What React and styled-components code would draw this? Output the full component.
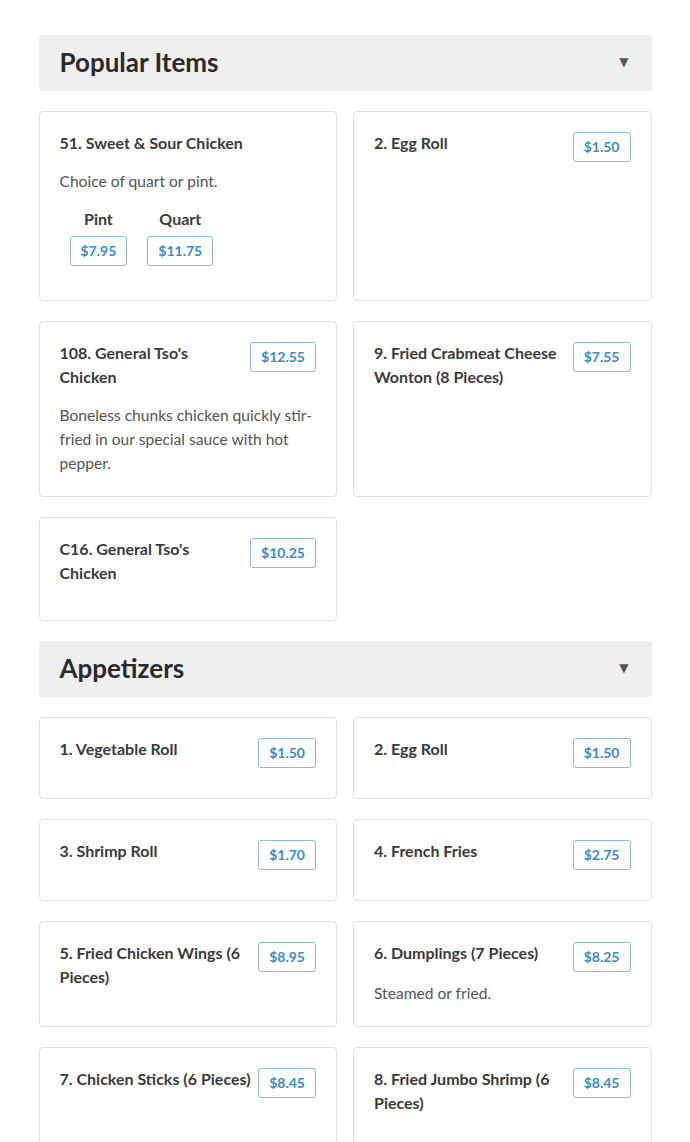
import React from 'react'
import styled, { createGlobalStyle } from 'styled-components'

const GlobalStyle = createGlobalStyle`
    body {
        margin: 0;
        background: #fff;
        font-family: Lato, "Liberation Sans", sans-serif;
        color: #333;
    }
`

const menu = [
    {
        name: 'Popular Items',
        items: [
            {
                title: '51. Sweet & Sour Chicken',
                description: 'Choice of quart or pint.',
                options: [
                    { label: 'Pint', price: '$7.95' },
                    { label: 'Quart', price: '$11.75' }
                ]
            },
            { title: '2. Egg Roll', price: '$1.50' },
            {
                title: "108. General Tso's Chicken",
                price: '$12.55',
                description: 'Boneless chunks chicken quickly stir-fried in our special sauce with hot pepper.'
            },
            { title: '9. Fried Crabmeat Cheese Wonton (8 Pieces)', price: '$7.55' },
            { title: "C16. General Tso's Chicken", price: '$10.25' }
        ]
    },
    {
        name: 'Appetizers',
        items: [
            { title: '1. Vegetable Roll', price: '$1.50' },
            { title: '2. Egg Roll', price: '$1.50' },
            { title: '3. Shrimp Roll', price: '$1.70' },
            { title: '4. French Fries', price: '$2.75' },
            { title: '5. Fried Chicken Wings (6 Pieces)', price: '$8.95' },
            { title: '6. Dumplings (7 Pieces)', price: '$8.25', description: 'Steamed or fried.' },
            { title: '7. Chicken Sticks (6 Pieces)', price: '$8.45' },
            { title: '8. Fried Jumbo Shrimp (6 Pieces)', price: '$8.45' }
        ]
    }
]

const MenuItem = ({ item }) => (
    <Card>
        <CardHeader>
            <ItemTitle>{item.title}</ItemTitle>
            {item.price && <Price $side>{item.price}</Price>}
        </CardHeader>
        {item.description && <Description>{item.description}</Description>}
        {item.options && (
            <Options>
                {item.options.map(opt => (
                    <Option key={opt.label}>
                        <OptionLabel>{opt.label}</OptionLabel>
                        <Price>{opt.price}</Price>
                    </Option>
                ))}
            </Options>
        )}
    </Card>
)

const App = () => {
    return (
        <>
            <GlobalStyle />
            <Page>
                {menu.map(section => (
                    <Section key={section.name}>
                        <SectionHeader>
                            <SectionTitle>{section.name}</SectionTitle>
                            <Caret>▼</Caret>
                        </SectionHeader>
                        <Grid>
                            {section.items.map(item => (
                                <MenuItem key={item.title} item={item} />
                            ))}
                        </Grid>
                    </Section>
                ))}
            </Page>
        </>
    )
}

export default App


const Page = styled.div`
    width: 613px;
    margin: 0 auto;
    padding-top: 35px;
    display: flex;
    flex-direction: column;
    gap: 20px;
`

const Section = styled.section`
    display: flex;
    flex-direction: column;
    gap: 20px;
`

const SectionHeader = styled.div`
    display: flex;
    align-items: center;
    justify-content: space-between;
    height: 56px;
    padding: 0 23px 2px 21px;
    box-sizing: border-box;
    background: #efefef;
    border-radius: 3px;
`

const SectionTitle = styled.h2`
    margin: 0;
    font-size: 26px;
    line-height: 30px;
    font-weight: 700;
    color: #2a2a2a;
`

const Caret = styled.span`
    font-size: 12px;
    color: #555;
    font-family: "DejaVu Sans", sans-serif;
`

const Grid = styled.div`
    display: grid;
    grid-template-columns: 1fr 1fr;
    column-gap: 16px;
    row-gap: 20px;
`

const Card = styled.div`
    border: 1px solid #e2e2e2;
    border-radius: 4px;
    padding: 19px 20px 21px;
    background: #fff;
`

const CardHeader = styled.div`
    display: flex;
    align-items: flex-start;
    justify-content: space-between;
    gap: 6px;
`

const ItemTitle = styled.h3`
    margin: 0 0 14px;
    font-size: 16px;
    line-height: 24px;
    font-weight: 700;
    color: #3a3a3a;
`

const Price = styled.span`
    display: inline-block;
    flex-shrink: 0;
    height: 30px;
    line-height: 28px;
    box-sizing: border-box;
    padding: 0 10px;
    margin-top: ${props => (props.$side ? '1px' : '0')};
    margin-bottom: ${props => (props.$side ? '9px' : '0')};
    border: 1px solid #8fbad6;
    border-radius: 3px;
    font-size: 14px;
    font-weight: 700;
    color: #3b8dc4;
    background: #fff;
`

const Description = styled.p`
    margin: 0;
    font-size: 15.6px;
    line-height: 24px;
    color: #555;
`

const Options = styled.div`
    display: flex;
    margin: 14px 0 13px;
`

const Option = styled.div`
    display: flex;
    flex-direction: column;
    align-items: center;
    gap: 5px;
    margin: 0 10px;
`

const OptionLabel = styled.span`
    font-size: 16px;
    line-height: 24px;
    font-weight: 700;
    color: #3a3a3a;
`
